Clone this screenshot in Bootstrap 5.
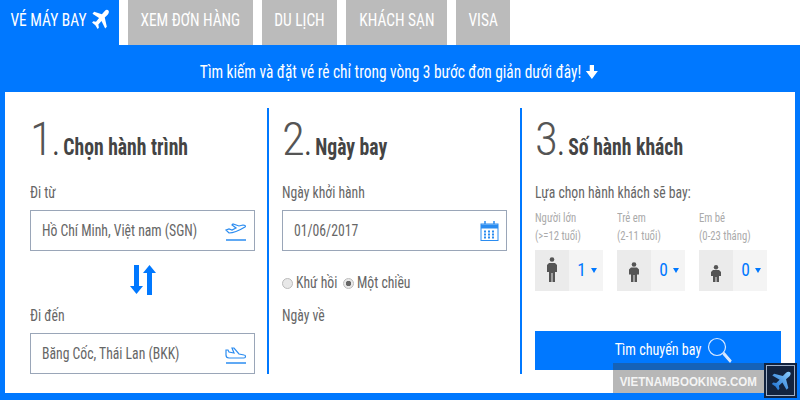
<!DOCTYPE html>
<html lang="en">
<head>
  <meta charset="UTF-8" />
  <title>Vé máy bay</title>
  <link href="https://cdn.jsdelivr.net/npm/bootstrap@5.3.0/dist/css/bootstrap.min.css" rel="stylesheet">
  <style>
    html, body { height: 400px; overflow: hidden; }
    body {
      width: 800px;
      position: relative;
      font-family: "Roboto Condensed", Roboto, "Liberation Sans", sans-serif;
      font-stretch: 75%;
      color: #555;
      background: #fff;
    }
    /* the whole reference is squashed horizontally, so text is too */
    .squeeze { display: inline-block; white-space: nowrap; transform: scaleX(.855); transform-origin: left center; }
    .squeeze-mid { transform-origin: center; }
    .tab-strip { height: 45px; gap: 9px; }
    .tab-item {
      background: #bbb;
      color: #fff;
      font-size: 18px;
      line-height: 40px;
      text-align: center;
      text-decoration: none;
      white-space: nowrap;
    }
    .tab-item svg { vertical-align: -5px; }
    .tab-item.is-on { background: #0078ff; width: 119px; padding-left: 2px; }
    .tab-w2 { width: 125px; }
    .tab-w3 { width: 75px; }
    .tab-w4 { width: 101px; }
    .tab-w5 { width: 54px; }
    .booking-panel { background: #0078ff; height: 355px; padding: 0 5px 7px; }
    .panel-head { height: 47px; padding-top: 5px; color: #fff; font-size: 18px; }
    .panel-head svg { vertical-align: -2px; }
    .panel-body { background: #fff; height: 301px; padding-top: 16px; }
    .step-col { height: 266px; }
    .step-one { width: 264px; padding-left: 25px; border-right: 2px solid #0078ff; }
    .step-two { width: 253px; padding-left: 13px; border-right: 2px solid #0078ff; }
    .step-three { width: 273px; padding-left: 13px; }
    .step-title { height: 48px; margin-bottom: 27px; padding-top: 7px; align-items: baseline; color: #444; font-weight: 700; font-size: 23px; }
    .step-num { font-weight: 300; font-size: 47px; line-height: 48px; color: #555; }
    .field-label { font-size: 16px; line-height: 20px; color: #666; margin-bottom: 7px; }
    .field-box {
      width: 225px;
      height: 41px;
      border: 1px solid #9aa6b8;
      padding: 1px 7px 0 11px;
      font-size: 16px;
      color: #666;
    }
    .field-text { flex: 1 1 0; min-width: 0; }
    .swap-row { height: 55px; width: 225px; padding-top: 13px; }
    .trip-row { margin-top: 22px; font-size: 16px; color: #666; gap: 3px; line-height: 20px; }
    .trip-text { width: 44px; }
    .radio-dot { width: 11px; height: 11px; border-radius: 50%; border: 1px solid #bbb; background: #e8e8e8; }
    .radio-dot.is-on { background: radial-gradient(#666 0 2.500px, #e8e8e8 3px); }
    .return-label { margin-top: 13px; font-size: 16px; color: #666; line-height: 20px; }
    .pax-hint { font-size: 16px; line-height: 20px; color: #666; margin-bottom: 6px; }
    .pax-row { gap: 14px; }
    .pax-item { width: 68px; }
    .pax-note { font-size: 12.5px; line-height: 18px; color: #aaa; margin-bottom: 5px; }
    .pax-box { height: 41px; background: #f4f4f4; }
    .pax-icon { width: 34px; background: #ebebeb; padding-bottom: 9px; }
    .pax-count { color: #0078ff; font-size: 17.5px; gap: 5px; padding-left: 2px; }
    .pax-caret { width: 0; height: 0; border-left: 3px solid transparent; border-right: 3px solid transparent; border-top: 5px solid #0078ff; }
    .search-btn {
      width: 246px;
      height: 39px;
      margin-top: 40px;
      padding: 0 0 0 16px;
      background: #0078ff;
      color: #fff;
      font-size: 16.5px;
      font-stretch: 75%;
      gap: 6px;
      border-radius: 0;
    }
    .search-btn:hover { background: #0078ff; color: #fff; }
    .search-label { transform-origin: right center; }
    .brand-strip { position: absolute; left: 613px; top: 363px; width: 184px; height: 35px; }
    .brand-text {
      width: 151px;
      height: 30px;
      background: linear-gradient(#1562b8 0 7px, #b7b7b7 7px);
      color: #f4f4f4;
      font: 700 13.500px/37px "Liberation Sans", sans-serif;
    }
    .brand-mark { width: 33px; background: #12233f; padding: 2px; }
    .brand-mark-in { border: 1px solid #9fb0c8; }
  </style>
</head>
<body>
  <div class="tab-strip d-flex">
    <a class="tab-item is-on"><span class="squeeze squeeze-mid">VÉ MÁY BAY
      <svg width="24" height="23" viewBox="0 0 24 24" fill="#fff"><path d="M22 2.500c-1.200-1.200-3.200-.8-4.500.5l-3.500 3.500L4.500 4 2.500 6l8 4.500-3.700 3.800-3.300-.6L2 15.200l4 2.800 2.800 4 1.500-1.500-.6-3.300 3.800-3.700 4.500 8 2-2-2.500-9.500L21 7c1.300-1.300 2.200-3.300 1-4.500z"/></svg></span>
    </a>
    <a class="tab-item tab-w2"><span class="squeeze squeeze-mid">XEM ĐƠN HÀNG</span></a>
    <a class="tab-item tab-w3"><span class="squeeze squeeze-mid">DU LỊCH</span></a>
    <a class="tab-item tab-w4"><span class="squeeze squeeze-mid">KHÁCH SẠN</span></a>
    <a class="tab-item tab-w5"><span class="squeeze squeeze-mid">VISA</span></a>
  </div>

  <div class="booking-panel">
    <div class="panel-head d-flex align-items-center justify-content-center">
      <span class="squeeze squeeze-mid">Tìm kiếm và đặt vé rẻ chỉ trong vòng 3 bước đơn giản dưới đây!
        <svg width="17" height="16" viewBox="0 0 16 16" fill="#fff"><path d="M5.500 1h5v6H15l-7 8-7-8h4.500z"/></svg></span>
    </div>
    <div class="panel-body d-flex">
      <div class="step-col step-one">
        <div class="step-title d-flex"><span class="step-num">1</span><span class="squeeze">. Chọn hành trình</span></div>
        <div class="field-label"><span class="squeeze">Đi từ</span></div>
        <div class="field-box d-flex align-items-center">
          <span class="squeeze field-text">Hồ Chí Minh, Việt nam (SGN)</span>
          <svg width="22" height="22" viewBox="0 0 22 22" fill="none" stroke="#2b8cf0" stroke-width="1.200"><path d="M1 10l3 3c5 0 11-3 16-6 1-1 0-2-2-2l-4 1-6-2-1 1 4 3-4 2-3-1z"/><path d="M1 20h20" stroke-width="1.500"/></svg>
        </div>
        <div class="swap-row d-flex justify-content-center">
          <svg width="26" height="32" viewBox="0 0 26 32" fill="#0078ff"><path d="M4 1h5v21h4l-6.500 8L0 22h4z"/><path d="M17 31h5V9h4L19.500 1 13 9h4z"/></svg>
        </div>
        <div class="field-label"><span class="squeeze">Đi đến</span></div>
        <div class="field-box d-flex align-items-center">
          <span class="squeeze field-text">Băng Cốc, Thái Lan (BKK)</span>
          <svg width="22" height="22" viewBox="0 0 22 22" fill="none" stroke="#2b8cf0" stroke-width="1.200"><path d="M1 7v5c0 2 1 3 3 3h15c2 0 2-3 0-3l-5-1-5-6H7l2 5-5-1-1-2z"/><path d="M1 20h20" stroke-width="1.500"/></svg>
        </div>
      </div>

      <div class="step-col step-two">
        <div class="step-title d-flex"><span class="step-num">2</span><span class="squeeze">. Ngày bay</span></div>
        <div class="field-label"><span class="squeeze">Ngày khởi hành</span></div>
        <div class="field-box d-flex align-items-center">
          <span class="squeeze field-text">01/06/2017</span>
          <svg width="19" height="21" viewBox="0 0 19 21" fill="none" stroke="#2b8cf0"><rect x="1" y="3" width="17" height="16.500"/><path d="M1 5.500h17" stroke-width="4"/><path d="M5 0v3M14 0v3" stroke-width="1.500"/><path d="M4 10.500h11M4 13.500h11M4 16.500h11" stroke-width="2" stroke-dasharray="2 2"/></svg>
        </div>
        <div class="trip-row d-flex align-items-center">
          <span class="radio-dot"></span><span class="squeeze trip-text">Khứ hồi</span>
          <span class="radio-dot is-on"></span><span class="squeeze">Một chiều</span>
        </div>
        <div class="return-label"><span class="squeeze">Ngày về</span></div>
      </div>

      <div class="step-col step-three">
        <div class="step-title d-flex"><span class="step-num">3</span><span class="squeeze">. Số hành khách</span></div>
        <div class="pax-hint"><span class="squeeze">Lựa chọn hành khách sẽ bay:</span></div>
        <div class="pax-row d-flex">
          <div class="pax-item">
            <div class="pax-note"><span class="squeeze">Người lớn<br>(>=12 tuổi)</span></div>
            <div class="pax-box d-flex">
              <div class="pax-icon d-flex align-items-end justify-content-center">
                <svg width="10" height="25" viewBox="0 0 10 25" fill="#555"><circle cx="5" cy="2.500" r="2.300"/><path d="M2 6h6l2 2v7H8v10H5.500v-9h-1v9H2V15H0V8z"/></svg>
              </div>
              <div class="pax-count flex-fill d-flex align-items-center justify-content-center">1<span class="pax-caret"></span></div>
            </div>
          </div>
          <div class="pax-item">
            <div class="pax-note"><span class="squeeze">Trẻ em<br>(2-11 tuổi)</span></div>
            <div class="pax-box d-flex">
              <div class="pax-icon d-flex align-items-end justify-content-center">
                <svg width="10" height="20" viewBox="0 0 10 20" fill="#555"><circle cx="5" cy="2.500" r="2.300"/><path d="M2 5.500h6l2 2v5H8V20H5.500v-7h-1v7H2v-7.500H0v-5z"/></svg>
              </div>
              <div class="pax-count flex-fill d-flex align-items-center justify-content-center">0<span class="pax-caret"></span></div>
            </div>
          </div>
          <div class="pax-item">
            <div class="pax-note"><span class="squeeze">Em bé<br>(0-23 tháng)</span></div>
            <div class="pax-box d-flex">
              <div class="pax-icon d-flex align-items-end justify-content-center">
                <svg width="10" height="17" viewBox="0 0 10 17" fill="#555"><circle cx="5" cy="2.300" r="2.200"/><path d="M2 5h6l2 2v4H8v6H5.500v-5h-1v5H2v-6H0V7z"/></svg>
              </div>
              <div class="pax-count flex-fill d-flex align-items-center justify-content-center">0<span class="pax-caret"></span></div>
            </div>
          </div>
        </div>
        <button class="search-btn btn border-0 d-flex align-items-center justify-content-center">
          <span class="squeeze search-label">Tìm chuyến bay</span>
          <svg width="25" height="27" viewBox="0 0 25 27" fill="none" stroke="#d8e8ff" stroke-width="1.200"><circle cx="10" cy="10" r="8.500"/><path d="M16 17l7 8 1-1.500-7-8" fill="#d8e8ff"/></svg>
        </button>
      </div>
    </div>
  </div>

  <div class="brand-strip d-flex">
    <div class="brand-text d-flex justify-content-center"><span class="squeeze squeeze-mid">VIETNAMBOOKING.COM</span></div>
    <div class="brand-mark d-flex">
      <div class="brand-mark-in flex-fill d-flex align-items-center justify-content-center">
        <svg width="22" height="22" viewBox="0 0 24 24">
          <defs><linearGradient id="logoFill" x1="1" y1="0" x2="0" y2="1"><stop offset="0" stop-color="#8fd0ff"/><stop offset="1" stop-color="#1468cc"/></linearGradient></defs>
          <path fill="url(#logoFill)" d="M22 2.500c-1.200-1.200-3.200-.8-4.500.5l-3.500 3.500L4.500 4 2.500 6l8 4.500-3.700 3.800-3.300-.6L2 15.200l4 2.800 2.800 4 1.500-1.500-.6-3.300 3.800-3.700 4.500 8 2-2-2.500-9.500L21 7c1.300-1.300 2.200-3.300 1-4.500z"/>
        </svg>
      </div>
    </div>
  </div>
  <script src="https://cdn.jsdelivr.net/npm/bootstrap@5.3.0/dist/js/bootstrap.bundle.min.js"></script>
</body>
</html>
